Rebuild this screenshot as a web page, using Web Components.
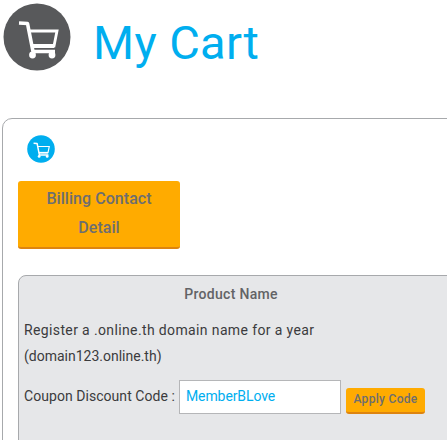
<!DOCTYPE html>
<html>
<head>
<meta charset="utf-8">
<title>My Cart</title>
<style>
html, body { margin: 0; padding: 0; background: #fff; overflow: hidden; height: 440px; }
body { font-family: Roboto, "Noto Sans", sans-serif; }
</style>
</head>
<body>
<cart-page></cart-page>

<script>
class CartIcon extends HTMLElement {
    constructor () {
        super()
        this.attachShadow({ mode: 'open' }).innerHTML = `
<style>
    :host { display: block; width: var(--size, 28px); height: var(--size, 28px); flex: none; }
    svg { display: block; width: 100%; height: 100%; }
</style>
<svg viewBox="0 0 68 68">
    <circle cx="34" cy="34" r="33.5" fill="${this.getAttribute('color') || '#58595b'}"/>
    <path d="M16 20l8.500 .5l5.500 28h22" fill="none" stroke="#fff" stroke-width="3.600" stroke-linejoin="round"/>
    <path d="M25 28h29l-3 15H29" fill="none" stroke="#fff" stroke-width="2.800"/>
    <path d="M29 41h22v4H29z" fill="#fff"/>
    <circle cx="29.500" cy="52" r="3.400" fill="#fff"/>
    <circle cx="49" cy="52" r="3.400" fill="#fff"/>
</svg>`
    }
}
customElements.define('cart-icon', CartIcon)

class PageTitle extends HTMLElement {
    constructor () {
        super()
        this.attachShadow({ mode: 'open' }).innerHTML = `
<style>
    :host { display: flex; align-items: center; gap: 22px; padding: 3px 0 0 3px; height: 67px; --size: 68px; }
    h1 { margin: 0; font: 400 47px/68px Roboto, sans-serif; color: #00aeef; letter-spacing: .4px; position: relative; top: 6px; }
</style>
<slot name="icon"></slot>
<h1><slot></slot></h1>`
    }
}
customElements.define('page-title', PageTitle)

class OrangeButton extends HTMLElement {
    constructor () {
        super()
        this.attachShadow({ mode: 'open' }).innerHTML = `
<style>
    :host { display: block; background: #ffab00; border-bottom: 2px solid #dd8410; border-radius: 3px; color: #6d6e71; text-align: center; font-weight: 500; box-sizing: border-box; }
</style>
<slot></slot>`
    }
}
customElements.define('orange-button', OrangeButton)

class ProductBox extends HTMLElement {
    constructor () {
        super()
        this.attachShadow({ mode: 'open' }).innerHTML = `
<style>
    :host { display: block; width: 460px; height: 200px; background: #e6e7e9; border: 1px solid #a7a9ac; border-radius: 8px 0 0 0; box-sizing: border-box; padding: 0 5px; color: #3b3b3d; font-size: 14px; }
    .name { color: #626366; font-weight: 500; text-align: center; line-height: 36px; letter-spacing: .3px; width: 424px; margin-left: -5px; }
    .desc { line-height: 26px; margin-top: 5px; width: 400px; }
    .desc .wide { letter-spacing: .37px; }
    .coupon { display: flex; align-items: flex-start; margin-top: 11px; }
    .label { width: 151px; line-height: 33px; margin-right: 4px; white-space: nowrap; letter-spacing: .05px; }
    .field { width: 162px; height: 34px; box-sizing: border-box; border: 1px solid #b5b6b8; background: #fff; color: #00aeef; padding: 0 6px; line-height: 30px; letter-spacing: -.1px; }
    orange-button { width: 79px; height: 26px; margin: 8px 0 0 5px; font-size: 12px; line-height: 23px; letter-spacing: .3px; }
</style>
<div class="name">Product Name</div>
<div class="desc"><span class="wide">Register a .online.th domain name for a year</span><br>(domain123.online.th)</div>
<div class="coupon">
    <span class="label">Coupon Discount Code :</span>
    <div class="field">MemberBLove</div>
    <orange-button>Apply Code</orange-button>
</div>`
    }
}
customElements.define('product-box', ProductBox)

class CartPanel extends HTMLElement {
    constructor () {
        super()
        this.attachShadow({ mode: 'open' }).innerHTML = `
<style>
    :host { display: block; width: 480px; height: 340px; margin: 48px 0 0 2px; border: 1px solid #a7a9ac; border-radius: 10px 0 0 0; box-sizing: border-box; padding: 16px 0 0 15px; --size: 28px; }
    cart-icon { margin-left: 9px; }
    orange-button { width: 162px; height: 68px; margin-top: 18px; font-size: 16px; line-height: 29px; padding-top: 3px; letter-spacing: .05px; }
    product-box { margin-top: 26px; }
</style>
<cart-icon color="#00aeef"></cart-icon>
<orange-button>Billing Contact<br>Detail</orange-button>
<product-box></product-box>`
    }
}
customElements.define('cart-panel', CartPanel)

class CartPage extends HTMLElement {
    constructor () {
        super()
        this.attachShadow({ mode: 'open' }).innerHTML = `
<style>
    :host { display: block; width: 447px; height: 440px; overflow: hidden; }
</style>
<page-title><cart-icon slot="icon"></cart-icon>My Cart</page-title>
<cart-panel></cart-panel>`
    }
}
customElements.define('cart-page', CartPage)
</script>
</body>
</html>
